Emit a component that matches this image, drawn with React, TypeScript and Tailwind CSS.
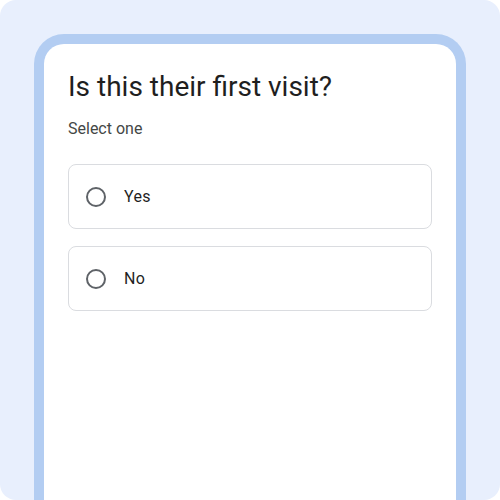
import React from "react";

function Option({ label }: { label: string }) {
  return (
    <div className="flex h-[65px] items-center rounded-[8px] border border-[#dadce0] pl-[16px]">
      <svg width="22" height="22" viewBox="0 0 22 22" className="shrink-0">
        <circle cx="11" cy="11" r="9" fill="none" stroke="#5f6368" strokeWidth="2" />
      </svg>
      <span className="ml-[17px] text-[16px] tracking-[0.3px] text-[#1f1f1f]">{label}</span>
    </div>
  );
}

export default function App() {
  return (
    <div className="h-[500px] w-[500px] overflow-hidden bg-white" style={{ fontFamily: "Roboto, 'Noto Sans', sans-serif" }}>
      <div className="h-full w-full overflow-hidden rounded-[16px] bg-[#e8effd] px-[34px] pt-[34px]">
        <div className="h-[520px] rounded-t-[30px] border-[10px] border-b-0 border-[#b3cdf2] bg-white px-[24px] pt-[26px]">
          <h1 className="text-[28px] leading-[34px] text-[#1f1f1f]">Is this their first visit?</h1>
          <p className="mt-[15px] text-[16px] leading-[20px] text-[#444746]">Select one</p>
          <div className="mt-[25px] flex w-[364px] flex-col gap-[17px]">
            <Option label="Yes" />
            <Option label="No" />
          </div>
        </div>
      </div>
    </div>
  );
}
